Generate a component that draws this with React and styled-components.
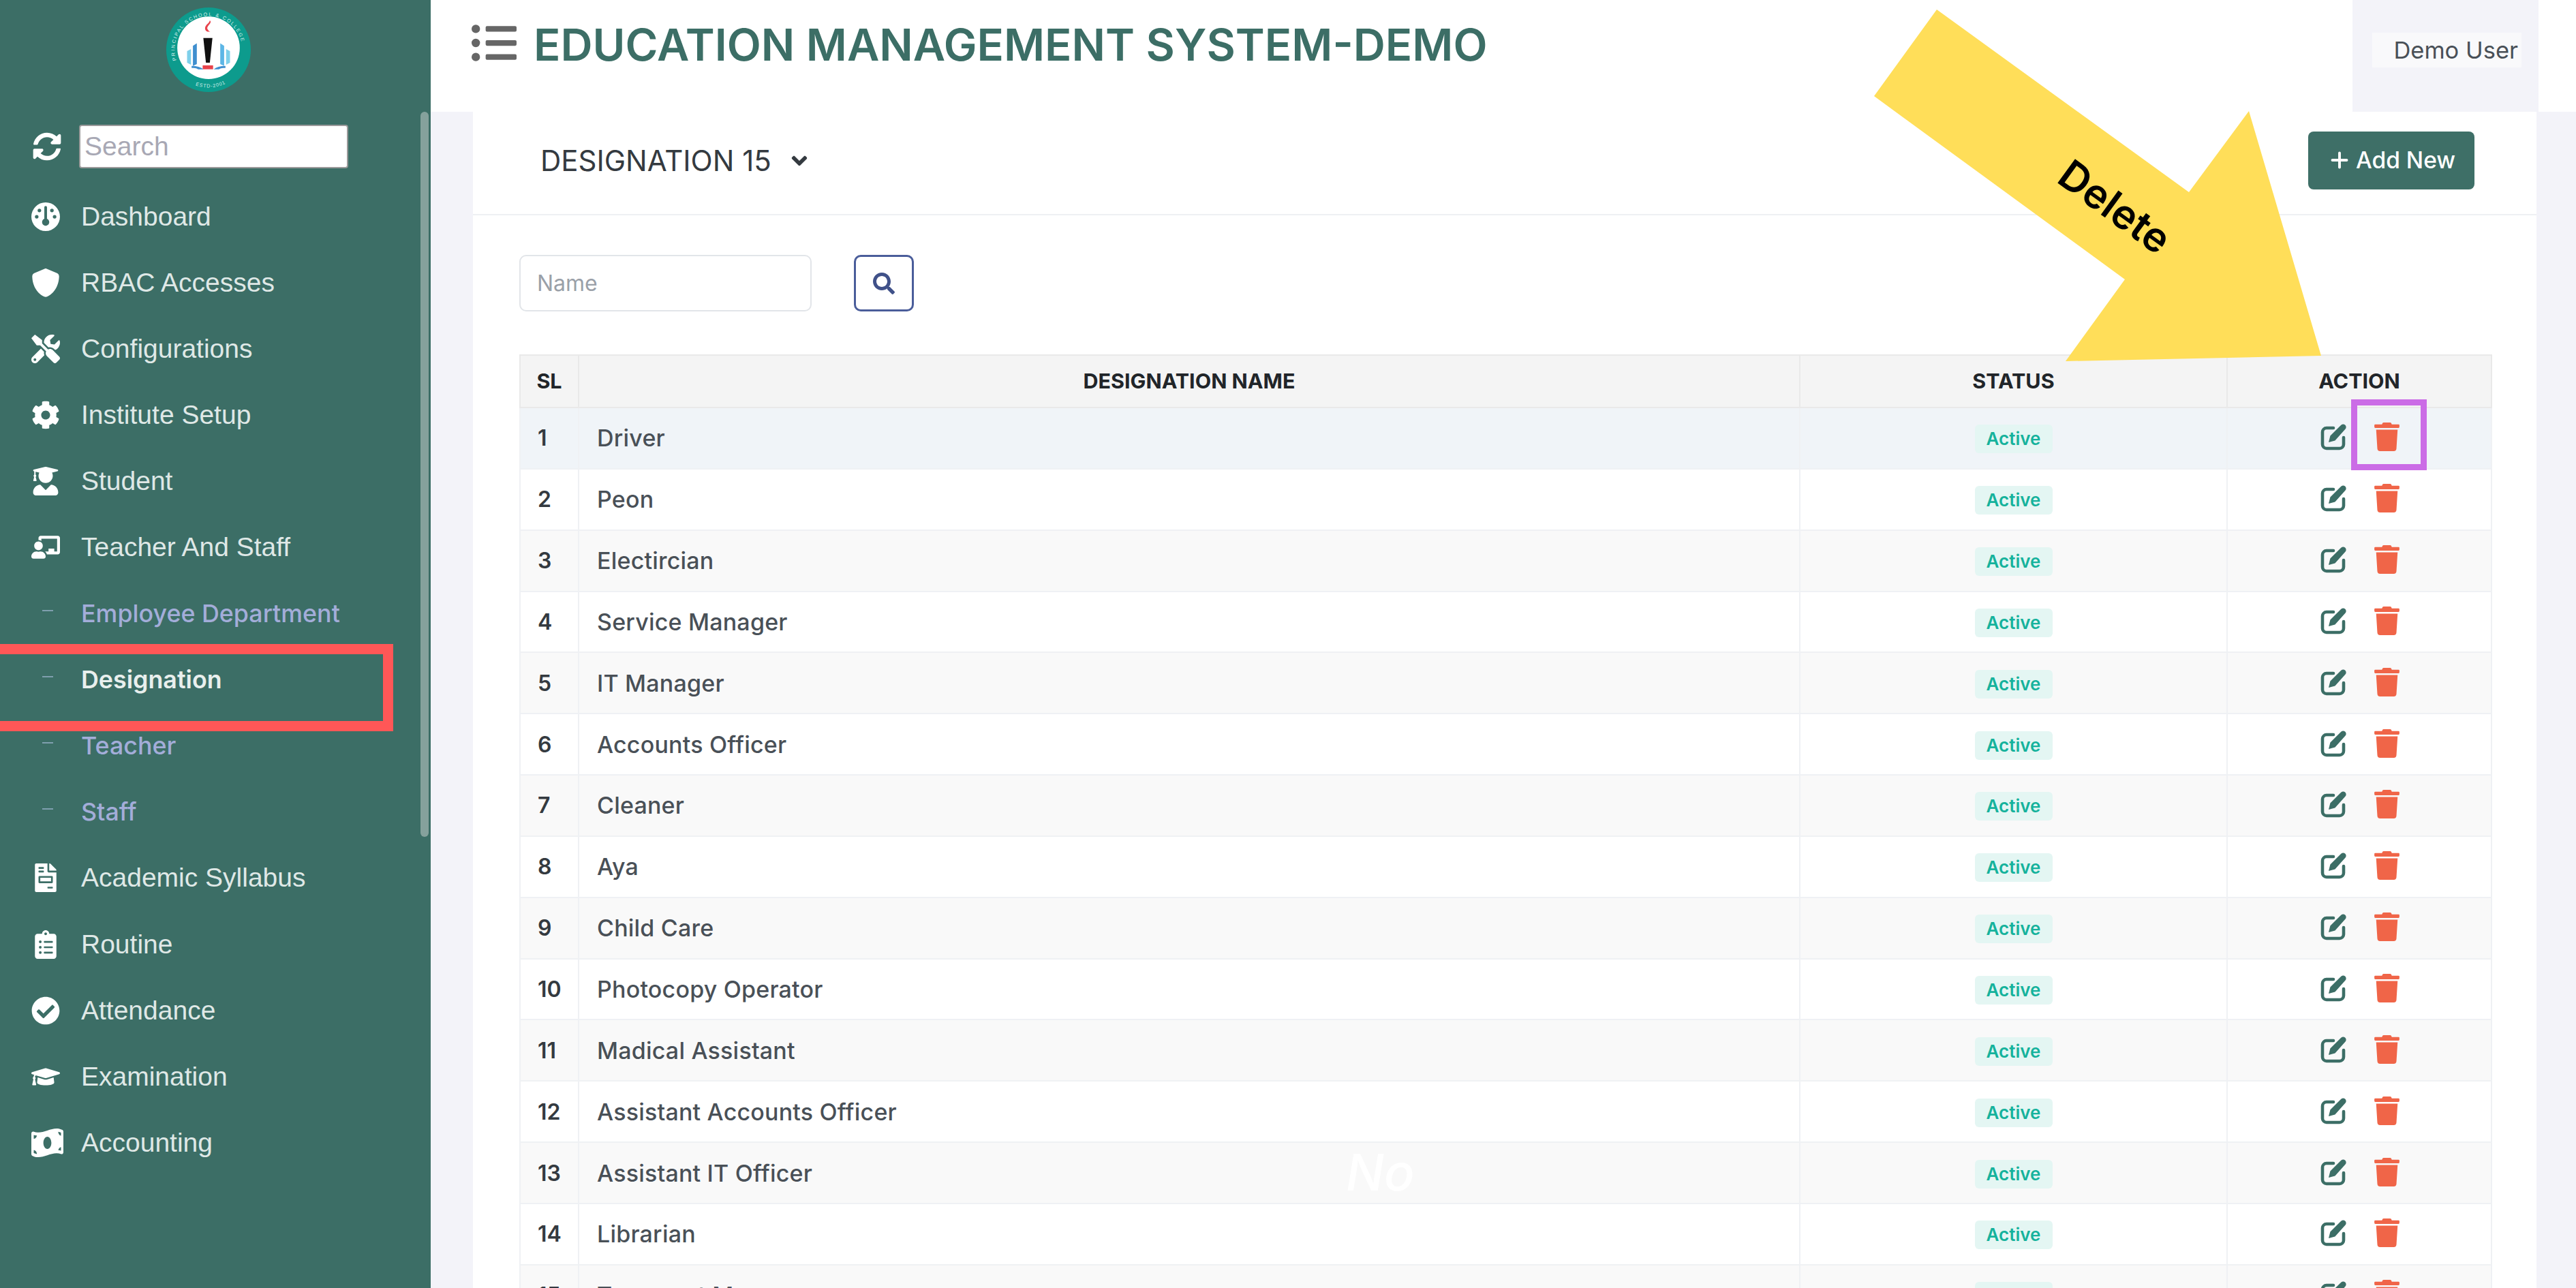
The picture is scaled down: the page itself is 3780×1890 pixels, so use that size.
import React from 'react';
import styled, { createGlobalStyle } from 'styled-components';
import {
  FaSyncAlt, FaTools, FaCog, FaUserGraduate, FaChalkboardTeacher,
  FaFileInvoice, FaClipboardList, FaCheckCircle, FaGraduationCap, FaMoneyBillWave, FaListUl,
  FaTrash, FaSearch, FaAngleDown,
} from 'react-icons/fa';
import { FaGauge, FaShield } from 'react-icons/fa6';
import { Plus } from 'lucide-react';

const GREEN = '#3c6e66';
const UI_FONT = `Inter, "Noto Sans", sans-serif`;

const Global = createGlobalStyle`
  html, body { margin: 0; padding: 0; background: #f3f3f9; overflow: hidden; }
  * { box-sizing: border-box; }
`;

const Page = styled.div`
  position: relative;
  display: grid;
  grid-template-columns: 632px 1fr;
  width: 3780px;
  height: 1890px;
  overflow: hidden;
  font-family: ${UI_FONT};
`;

const Sidebar = styled.aside`
  position: relative;
  background: ${GREEN};
  font-family: "Liberation Sans", Arial, sans-serif;
`;
const LogoBox = styled.div`
  height: 164px;
  padding-top: 10px;
  text-align: center;
  padding-right: 20px;
`;
const SearchRow = styled.div`
  height: 105px;
  display: flex;
  align-items: center;
  padding-left: 46px;
  padding-bottom: 4px;
  svg { height: 42px; width: 46px; color: #fff; }
`;
const SideSearch = styled.input`
  width: 395px;
  height: 64px;
  margin-left: 24px;
  border: 2px solid #9a9a9a;
  border-radius: 4px;
  background: #fff;
  padding: 0 6px;
  font-family: "Liberation Sans", Arial, sans-serif;
  font-size: 39px;
  &::placeholder { color: #a8a8b4; opacity: 1; }
`;
const NavItem = styled.div`
  height: 97.1px;
  display: flex;
  align-items: center;
  padding-left: 46px;
  font-size: 39px;
  color: #dfe8e6;
`;
const NavIcon = styled.span`
  flex: 0 0 73px;
  display: flex;
  color: #fff;
  svg { height: ${p => p.$h || 42}px; width: ${p => (p.$w ? `${p.$w}px` : 'auto')}; }
`;
const SubItem = styled.div`
  height: 97.1px;
  display: flex;
  align-items: center;
  padding-left: 62px;
  font-family: ${UI_FONT};
  font-size: 35.8px;
  font-weight: ${p => (p.$active ? 600 : 500)};
  color: ${p => (p.$active ? '#e8efed' : '#a3add9')};
`;
const Dash = styled.i`
  flex: 0 0 16px;
  height: 2px;
  margin-right: 41px;
  margin-bottom: 8px;
  background: #7f9fae;
`;
const ScrollThumb = styled.div`
  position: absolute;
  left: 617px;
  top: 164px;
  width: 12px;
  height: 1064px;
  border-radius: 6px;
  background: #85a19c;
`;

const Main = styled.main`
  display: flex;
  flex-direction: column;
  min-width: 0;
`;
const Topbar = styled.header`
  flex: 0 0 164px;
  display: flex;
  align-items: flex-start;
  background: #fff;
  padding-left: 60px;
`;
const MenuIcon = styled.span`
  margin-top: 30px;
  color: #666;
  display: flex;
  svg { height: 66px; width: 66px; }
`;
const Title = styled.h1`
  margin: 26px 0 0 25px;
  font-size: 65.2px;
  line-height: 80px;
  font-weight: 600;
  color: ${GREEN};
  white-space: nowrap;
`;
const UserBlock = styled.div`
  margin-left: auto;
  margin-right: 55px;
  width: 273px;
  height: 164px;
  background: #f3f3f9;
  padding: 48px 25px 0 29px;
`;
const UserBadge = styled.div`
  height: 51px;
  background: #f9f9fb;
  text-align: right;
  padding-right: 5px;
  font-size: 34.5px;
  line-height: 51px;
  color: #495057;
  white-space: nowrap;
`;

const Content = styled.div`
  flex: 1;
  padding: 0 58px 0 62px;
  min-height: 0;
`;
const Card = styled.section`
  background: #fff;
  height: 100%;
`;
const CardHeader = styled.div`
  height: 152px;
  display: flex;
  align-items: center;
  justify-content: space-between;
  padding: 0 91px 8px 99px;
  border-bottom: 2px solid #eef0f3;
`;
const CardTitle = styled.div`
  display: flex;
  align-items: center;
  gap: 23px;
  font-size: 42px;
  color: #343a40;
  svg { width: 36px; height: 36px; margin-top: 2px; }
`;
const AddButton = styled.button`
  width: 244px;
  height: 85px;
  display: flex;
  align-items: center;
  justify-content: center;
  gap: 6px;
  border: 0;
  border-radius: 8px;
  background: #3e6f67;
  color: #fff;
  font-family: ${UI_FONT};
  font-size: 33.5px;
  font-weight: 500;
`;
const CardBody = styled.div`
  padding: 58px 67px 0 68px;
`;
const FilterRow = styled.div`
  display: flex;
  gap: 62px;
  margin-bottom: 63px;
`;
const NameInput = styled.input`
  width: 429px;
  height: 83px;
  border: 2px solid #e2e5e9;
  border-radius: 10px;
  padding: 0 24px;
  font-family: ${UI_FONT};
  font-size: 32px;
  &::placeholder { color: #9aa0a8; opacity: 1; }
`;
const SearchButton = styled.button`
  width: 88px;
  height: 83px;
  border: 3px solid #4a5d9a;
  border-radius: 10px;
  background: #fff;
  color: #405189;
  display: flex;
  align-items: center;
  justify-content: center;
  svg { width: 32px; height: 32px; }
`;
const Table = styled.table`
  width: 2893px;
  table-layout: fixed;
  border-collapse: collapse;
  border: 2px solid #eceef1;
`;
const Col = styled.col`
  width: ${p => p.$w}px;
`;
const Th = styled.th`
  height: 77px;
  background: #f4f4f4;
  border: 2px solid #e9e9e9;
  font-size: 30.5px;
  font-weight: 700;
  color: #212529;
  text-align: center;
  padding: 0 0 3px;
`;
const Tr = styled.tr`
  background: ${p => (p.$hover ? '#f0f4f8' : p.$striped ? '#f9f9f9' : '#fff')};
`;
const Td = styled.td`
  height: 89.85px;
  border: 2px solid #eff1f4;
  padding: 0 0 0 ${p => p.$pad || 0}px;
  text-align: ${p => (p.$center ? 'center' : 'left')};
  white-space: nowrap;
`;
const SerialText = styled.span`
  font-size: 32px;
  font-weight: 600;
  color: #343a40;
`;
const NameText = styled.span`
  font-size: 34px;
  font-weight: 500;
  letter-spacing: 0.2px;
  color: #495057;
`;
const Badge = styled.span`
  display: inline-block;
  width: 114px;
  height: 42px;
  margin-top: 3px;
  border-radius: 6px;
  background: #e4f6f3;
  color: #15b29c;
  font-size: 26px;
  font-weight: 600;
  line-height: 42px;
  text-align: center;
  vertical-align: middle;
`;
const Actions = styled.div`
  display: flex;
  align-items: center;
  justify-content: center;
  gap: 38px;
  margin-bottom: 3px;
`;
const TrashIcon = styled(FaTrash)`
  height: 42px;
  width: 37px;
  color: #f06548;
`;

/* presentation marks laid over the screenshot */
const Arrow = styled.svg`
  position: absolute;
  left: 0;
  top: 0;
  pointer-events: none;
`;
const DeleteLabel = styled.div`
  position: absolute;
  left: 2987px;
  top: 273px;
  width: 234px;
  text-align: center;
  transform: rotate(36deg);
  font-size: 60px;
  line-height: 60px;
  font-weight: 600;
  color: #000;
`;
const MarkBox = styled.div`
  position: absolute;
  left: ${p => p.$x}px;
  top: ${p => p.$y}px;
  width: ${p => p.$w}px;
  height: ${p => p.$h}px;
  border: ${p => p.$b}px solid ${p => p.$c};
`;
const GhostText = styled.div`
  position: absolute;
  left: 1975px;
  top: 1675px;
  font-size: 74px;
  font-style: italic;
  font-weight: 500;
  color: #ffffff;
`;

function Logo() {
  return (
    <svg width="126" height="126" viewBox="0 0 132 132">
      <defs>
        <path id="ringTop" d="M 21 92 A 52 52 0 1 1 111 92" />
        <path id="ringBottom" d="M 40 118 A 58 58 0 0 0 92 118" />
      </defs>
      <circle cx="66" cy="66" r="65" fill="#0d9b8d" />
      <circle cx="66" cy="63" r="48" fill="#fff" />
      <text fontFamily="Liberation Sans" fontSize="7.5" fill="#d6f0ec" letterSpacing="2">
        <textPath href="#ringTop" startOffset="5%">PRINCIPAL SCHOOL &amp; COLLEGE</textPath>
      </text>
      <text fontFamily="Liberation Sans" fontSize="7.5" fill="#d6f0ec" letterSpacing="1">
        <textPath href="#ringBottom" startOffset="12%">ESTD-2001</textPath>
      </text>
      <path d="M68 21c5 4-7 9-3 14 1 2 3 3 4 3-8 2-10-5-7-9 2-3 5-4 6-8z" fill="#e8434c" />
      <path d="M58 48h14l-4 38h-6z" fill="#111" />
      <rect x="57" y="90" width="16" height="6" fill="#e8434c" />
      <path d="M33 68l6-3v24l-6-3z" fill="#7fd0ea" />
      <path d="M42 60l6-4v32l-6 3z" fill="#3f8fcf" />
      <path d="M84 56l6 4v31l-6-3z" fill="#5cb6e6" />
      <path d="M93 65l6 3v18l-6 3z" fill="#7fd0ea" />
      <path d="M40 91c8 0 14 2 18 5h-8c-3-2-6-2-10-2z" fill="#3f8fcf" />
      <path d="M92 91c-8 0-14 2-18 5h8c3-2 6-2 10-2z" fill="#3f8fcf" />
    </svg>
  );
}

function EditMark() {
  return (
    <svg width="42" height="42" viewBox="0 0 42 42" fill="none">
      <path d="M20 8H10a6 6 0 0 0-6 6v18a6 6 0 0 0 6 6h19a6 6 0 0 0 6-6V22" stroke={GREEN} strokeWidth="4.6" strokeLinecap="round" />
      <path d="M13 29l2.4-9.6L31 4a4 4 0 0 1 6.6 5.6L22.4 26.4z" fill={GREEN} />
    </svg>
  );
}

const navTop = [
  { label: 'Dashboard', icon: <FaGauge /> },
  { label: 'RBAC Accesses', icon: <FaShield /> },
  { label: 'Configurations', icon: <FaTools /> },
  { label: 'Institute Setup', icon: <FaCog /> },
  { label: 'Student', icon: <FaUserGraduate /> },
  { label: 'Teacher And Staff', icon: <FaChalkboardTeacher /> },
];
const navSub = [
  { label: 'Employee Department' },
  { label: 'Designation', active: true },
  { label: 'Teacher' },
  { label: 'Staff' },
];
const navBottom = [
  { label: 'Academic Syllabus', icon: <FaFileInvoice /> },
  { label: 'Routine', icon: <FaClipboardList /> },
  { label: 'Attendance', icon: <FaCheckCircle /> },
  { label: 'Examination', icon: <FaGraduationCap /> },
  { label: 'Accounting', icon: <FaMoneyBillWave preserveAspectRatio="none" />, h: 48, w: 47 },
];

const designations = [
  'Driver', 'Peon', 'Electircian', 'Service Manager', 'IT Manager', 'Accounts Officer', 'Cleaner', 'Aya',
  'Child Care', 'Photocopy Operator', 'Madical Assistant', 'Assistant Accounts Officer', 'Assistant IT Officer',
  'Librarian', 'Transport Manager',
];

function NavRow({ item }) {
  return (
    <NavItem>
      <NavIcon $h={item.h} $w={item.w}>{item.icon}</NavIcon>
      {item.label}
    </NavItem>
  );
}

export default function App() {
  return (
    <Page>
      <Global />
      <Sidebar>
        <LogoBox><Logo /></LogoBox>
        <SearchRow>
          <FaSyncAlt />
          <SideSearch placeholder="Search" />
        </SearchRow>
        {navTop.map(item => <NavRow key={item.label} item={item} />)}
        {navSub.map(item => (
          <SubItem key={item.label} $active={item.active}>
            <Dash />
            {item.label}
          </SubItem>
        ))}
        {navBottom.map(item => <NavRow key={item.label} item={item} />)}
        <ScrollThumb />
      </Sidebar>

      <Main>
        <Topbar>
          <MenuIcon><FaListUl /></MenuIcon>
          <Title>EDUCATION MANAGEMENT SYSTEM-DEMO</Title>
          <UserBlock>
            <UserBadge>Demo User</UserBadge>
          </UserBlock>
        </Topbar>
        <Content>
          <Card>
            <CardHeader>
              <CardTitle>DESIGNATION 15 <FaAngleDown /></CardTitle>
              <AddButton><Plus size={36} strokeWidth={2.6} /> Add New</AddButton>
            </CardHeader>
            <CardBody>
              <FilterRow>
                <NameInput placeholder="Name" />
                <SearchButton><FaSearch /></SearchButton>
              </FilterRow>
              <Table>
                <colgroup>
                  <Col $w={86} />
                  <Col $w={1792} />
                  <Col $w={627} />
                  <Col $w={388} />
                </colgroup>
                <thead>
                  <tr>
                    <Th>SL</Th>
                    <Th>DESIGNATION NAME</Th>
                    <Th>STATUS</Th>
                    <Th>ACTION</Th>
                  </tr>
                </thead>
                <tbody>
                  {designations.map((name, i) => (
                    <Tr key={name} $hover={i === 0} $striped={i % 2 === 0}>
                      <Td $pad={25}><SerialText>{i + 1}</SerialText></Td>
                      <Td $pad={26}><NameText>{name}</NameText></Td>
                      <Td $center><Badge>Active</Badge></Td>
                      <Td $center>
                        <Actions>
                          <EditMark />
                          <TrashIcon />
                        </Actions>
                      </Td>
                    </Tr>
                  ))}
                </tbody>
              </Table>
            </CardBody>
          </Card>
        </Content>
      </Main>

      <MarkBox $x={-20} $y={945} $w={597} $h={128} $b={15} $c="#ff5757" />
      <MarkBox $x={3450} $y={586} $w={111} $h={104} $b={9} $c="#cb6ce6" />
      <Arrow width="3780" height="1890" viewBox="0 0 3780 1890">
        <polygon points="2842,14 2750,141 3118,410 3031,530 3406,522 3300,163 3212,282" fill="#ffde59" />
      </Arrow>
      <DeleteLabel>Delete</DeleteLabel>
      <GhostText>No</GhostText>
    </Page>
  );
}
